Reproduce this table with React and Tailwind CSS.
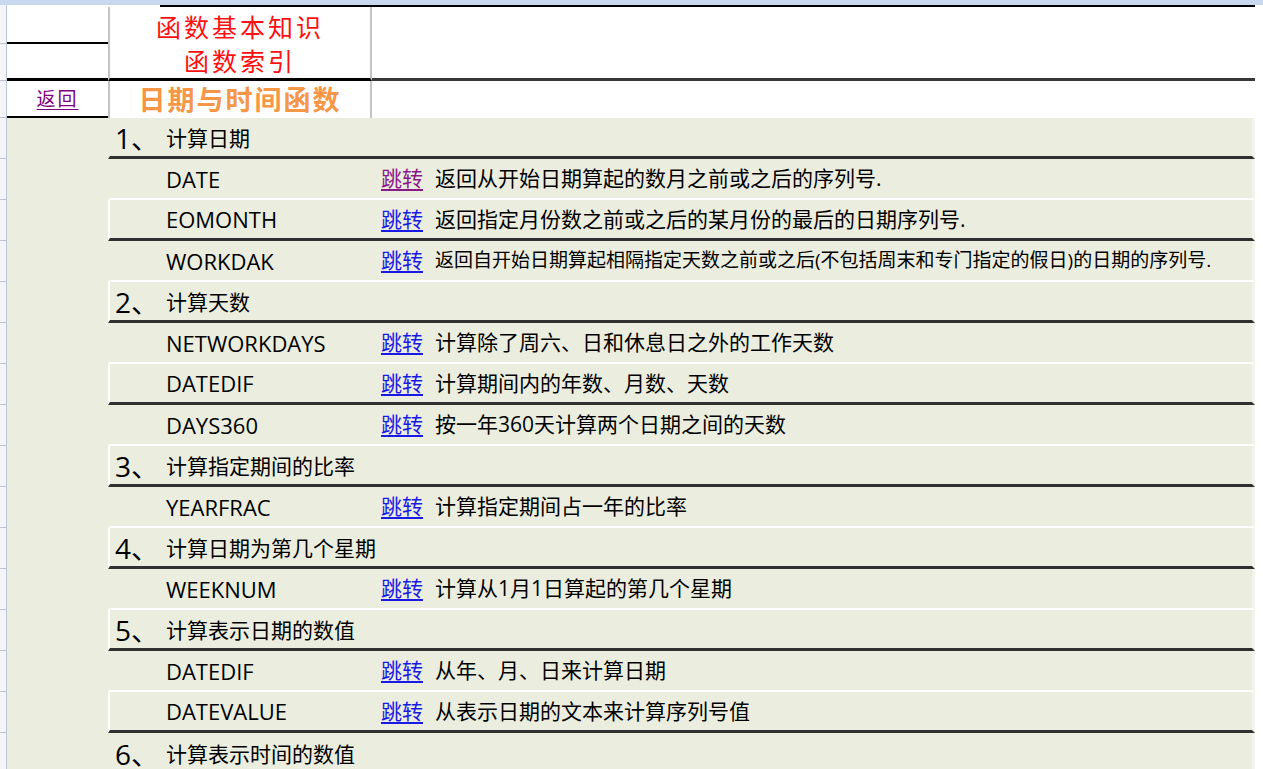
import React from "react";

const rows = [
  { n: "1", t: "计算日期" },
  { f: "DATE", d: "返回从开始日期算起的数月之前或之后的序列号.", v: true },
  { f: "EOMONTH", d: "返回指定月份数之前或之后的某月份的最后的日期序列号." },
  { f: "WORKDAK", d: "返回自开始日期算起相隔指定天数之前或之后(不包括周末和专门指定的假日)的日期的序列号.", s: true },
  { n: "2", t: "计算天数" },
  { f: "NETWORKDAYS", d: "计算除了周六、日和休息日之外的工作天数" },
  { f: "DATEDIF", d: "计算期间内的年数、月数、天数" },
  { f: "DAYS360", d: "按一年360天计算两个日期之间的天数" },
  { n: "3", t: "计算指定期间的比率" },
  { f: "YEARFRAC", d: "计算指定期间占一年的比率" },
  { n: "4", t: "计算日期为第几个星期" },
  { f: "WEEKNUM", d: "计算从1月1日算起的第几个星期" },
  { n: "5", t: "计算表示日期的数值" },
  { f: "DATEDIF", d: "从年、月、日来计算日期" },
  { f: "DATEVALUE", d: "从表示日期的文本来计算序列号值" },
  { n: "6", t: "计算表示时间的数值" },
];

function Strip({ h }) {
  return <div className={`w-[7px] shrink-0 border-r border-b border-[#b9c4d4] bg-[#f3f5f9] ${h}`} />;
}

function DataRow({ r, i }) {
  const bottom = i % 2 === 0 ? "border-b-[3px] border-b-[#303030]" : "border-b-2 border-b-white";
  const left = i >= 2 && i % 2 === 0 ? "border-l-white" : "border-l-[#ebeedf]";
  return (
    <div className="flex h-[41px]">
      <Strip h="h-[41px]" />
      <div className="w-[101px] shrink-0 bg-[#ebeedf]" />
      <div className={`flex w-[1147px] shrink-0 items-center border-l-2 border-r-[3px] border-r-[#f3f4ec] bg-[#ebeedf] text-black ${bottom} ${left}`}>
        <div className="w-[56px] shrink-0 pl-[5px] pt-[2px] text-[28px] leading-none">
          {r.n ? `${r.n}、` : ""}
        </div>
        {r.n ? (
          <div className="pt-[3px] text-[21px] leading-none">{r.t}</div>
        ) : (
          <>
            <div className="w-[215px] shrink-0 text-[22px] leading-none">{r.f}</div>
            <div className="w-[54px] shrink-0 text-[21px] leading-none">
              <span className={`underline underline-offset-[3px] ${r.v ? "text-[#8a1a8a]" : "text-[#1a1ae6]"}`}>跳转</span>
            </div>
            <div className={`whitespace-nowrap leading-none ${r.s ? "text-[19px]" : "text-[21px]"}`}>{r.d}</div>
          </>
        )}
      </div>
      <div className="flex-1 bg-white" />
    </div>
  );
}

export default function App() {
  return (
    <div className="h-[769px] w-[1263px] overflow-hidden bg-white font-['Open_Sans','Noto_Sans_CJK_SC',sans-serif]">
      <div className="h-[5px] bg-[#c8d9ef]" />
      <div className="flex h-[2px]">
        <div className="w-[7px] shrink-0 border-r border-[#b9c4d4] bg-[#f3f5f9]" />
        <div className="w-[153px] shrink-0 bg-white" />
        <div className="w-[1095px] shrink-0 bg-black" />
        <div className="flex-1 bg-white" />
      </div>
      {/* header row 1 */}
      <div className="flex h-[37px]">
        <Strip h="h-[37px]" />
        <div className="w-[101px] shrink-0 border-b-2 border-black" />
        <div className="flex w-[264px] shrink-0 items-center justify-center border-x-2 border-[#c4c4c4] pt-[4px] text-[25px] leading-none tracking-[3px] text-[#ff1010]">
          函数基本知识
        </div>
        <div className="flex-1" />
      </div>
      {/* header row 2 */}
      <div className="flex h-[37px]">
        <Strip h="h-[37px]" />
        <div className="w-[101px] shrink-0 border-b-[3px] border-black" />
        <div className="flex w-[264px] shrink-0 items-center justify-center border-x-2 border-b-[3px] border-x-[#c4c4c4] border-b-black pt-[1px] text-[25px] leading-none tracking-[3px] text-[#ff1010]">
          函数索引
        </div>
        <div className="w-[883px] shrink-0 border-b-[3px] border-[#383838]" />
        <div className="flex-1" />
      </div>
      {/* header row 3 */}
      <div className="flex h-[37px]">
        <Strip h="h-[37px]" />
        <div className="flex w-[101px] shrink-0 items-center justify-center border-b-2 border-black pt-[1px]">
          <span className="text-[19px] leading-none tracking-[2px] text-[#800080] underline underline-offset-[3px]">返回</span>
        </div>
        <div className="flex w-[264px] shrink-0 items-center justify-center border-x-2 border-[#c4c4c4] text-[27px] font-semibold leading-none tracking-[2px] text-[#f79646]">
          日期与时间函数
        </div>
        <div className="flex-1" />
      </div>
      {rows.map((r, i) => (
        <DataRow key={i} r={r} i={i} />
      ))}
    </div>
  );
}
